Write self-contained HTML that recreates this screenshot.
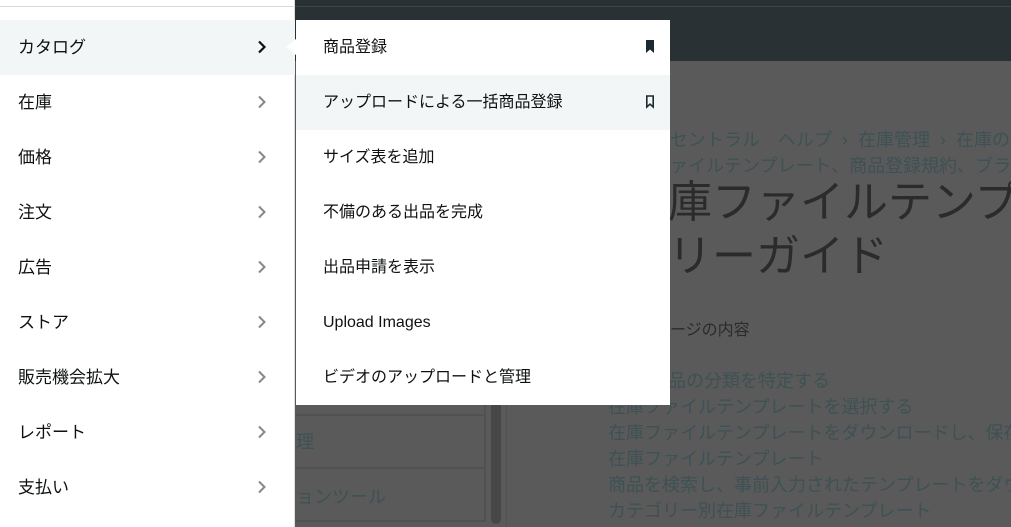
<!DOCTYPE html>
<html><head><meta charset="utf-8"><style>
*{margin:0;padding:0;box-sizing:border-box}
body{width:1011px;height:527px;overflow:hidden;position:relative;background:#5a5a5a;font-family:"Liberation Sans","Noto Sans CJK JP",sans-serif}
.hdr{position:absolute;left:0;top:0;width:1011px;height:61px;background:#2a3134}
.hdr .l{position:absolute;left:0;top:6px;width:1011px;height:1px;background:#3c4548}
.side{position:absolute;left:0;top:0;width:295px;height:527px;background:#fff;border-right:1px solid #ddd}
.side .top{position:absolute;left:0;top:6px;width:295px;height:1px;background:#d5dbdb}
.si{position:absolute;left:0;width:295px;height:55px;font-size:17px;color:#0f1111;line-height:55px;padding-left:18px}
.si.a{background:#f3f6f6}
.si svg{position:absolute;left:257px;top:20px}
.pop{position:absolute;left:296px;top:20px;width:374px;height:385px;background:#fff}
.pi{height:55px;line-height:55px;font-size:16px;color:#0f1111;padding-left:27px;position:relative}
.pi.a{background:#f3f6f6}
.pi svg{position:absolute;left:349px;top:20px}
.caret{position:absolute;left:286px;top:39px;width:0;height:0;border-top:8px solid transparent;border-bottom:8px solid transparent;border-right:10px solid #fff}
.c{position:absolute;white-space:nowrap;color:#3e5154}
.box{position:absolute;left:296px;width:190px;height:53px;border-bottom:2px solid #515151;border-right:2px solid #515151}
</style></head><body>
<div class="hdr"><div class="l"></div></div>
<div class="box" style="top:363px"></div>
<div class="box" style="top:416px"></div>
<div class="box" style="top:469px"></div>
<div class="c" style="left:296px;top:428px;font-size:18px">理</div>
<div class="c" style="left:296px;top:483px;font-size:18px">ョンツール</div>
<div style="position:absolute;left:491px;top:400px;width:10px;height:124px;border-radius:5px;background:#474747"></div>
<div style="position:absolute;left:506px;top:61px;width:1px;height:466px;background:#525252"></div>
<div class="c" style="left:670px;top:126px;font-size:18px">セントラル　ヘルプ&nbsp;&nbsp;›&nbsp;&nbsp;在庫管理&nbsp;&nbsp;›&nbsp;&nbsp;在庫の</div>
<div class="c" style="left:652px;top:152px;font-size:18px">ファイルテンプレート、商品登録規約、ブラウ</div>
<div class="c" style="left:624px;top:176px;font-size:44px;line-height:54px;color:#2b2b2b">在庫ファイルテンプ<br>ゴリーガイド</div>
<div class="c" style="left:654px;top:316px;font-size:16px;color:#2b2b2b">ページの内容</div>
<div class="c" style="left:608px;top:368px;font-size:18px;line-height:26px"><span style="padding-left:60px">品の分類を特定する</span><br>在庫ファイルテンプレートを選択する<br>在庫ファイルテンプレートをダウンロードし、保存<br>在庫ファイルテンプレート<br>商品を検索し、事前入力されたテンプレートをダウ<br>カテゴリー別在庫ファイルテンプレート</div>
<div class="side"><div class="top"></div>
<div class="si a" style="top:20px">カタログ<svg width="10" height="14"><path d="M2 1.5L7.5 7 2 12.5" stroke="#0f1111" stroke-width="2.2" fill="none"/></svg></div>
<div class="si" style="top:75px">在庫<svg width="10" height="14"><path d="M2 1.5L7.5 7 2 12.5" stroke="#888" stroke-width="2" fill="none"/></svg></div>
<div class="si" style="top:130px">価格<svg width="10" height="14"><path d="M2 1.5L7.5 7 2 12.5" stroke="#888" stroke-width="2" fill="none"/></svg></div>
<div class="si" style="top:185px">注文<svg width="10" height="14"><path d="M2 1.5L7.5 7 2 12.5" stroke="#888" stroke-width="2" fill="none"/></svg></div>
<div class="si" style="top:240px">広告<svg width="10" height="14"><path d="M2 1.5L7.5 7 2 12.5" stroke="#888" stroke-width="2" fill="none"/></svg></div>
<div class="si" style="top:295px">ストア<svg width="10" height="14"><path d="M2 1.5L7.5 7 2 12.5" stroke="#888" stroke-width="2" fill="none"/></svg></div>
<div class="si" style="top:350px">販売機会拡大<svg width="10" height="14"><path d="M2 1.5L7.5 7 2 12.5" stroke="#888" stroke-width="2" fill="none"/></svg></div>
<div class="si" style="top:405px">レポート<svg width="10" height="14"><path d="M2 1.5L7.5 7 2 12.5" stroke="#888" stroke-width="2" fill="none"/></svg></div>
<div class="si" style="top:460px">支払い<svg width="10" height="14"><path d="M2 1.5L7.5 7 2 12.5" stroke="#888" stroke-width="2" fill="none"/></svg></div>
</div>
<div class="caret"></div>
<div class="pop">
<div class="pi">商品登録<svg width="10" height="14"><path d="M1 0H9V13L5 9.5 1 13Z" fill="#1b2a30"/></svg></div>
<div class="pi a">アップロードによる一括商品登録<svg width="10" height="14"><path d="M1.8 1H8.2V12L5 9.2 1.8 12Z" fill="none" stroke="#1b2a30" stroke-width="1.6"/></svg></div>
<div class="pi">サイズ表を追加</div>
<div class="pi">不備のある出品を完成</div>
<div class="pi">出品申請を表示</div>
<div class="pi">Upload Images</div>
<div class="pi">ビデオのアップロードと管理</div>
</div>
</body></html>
